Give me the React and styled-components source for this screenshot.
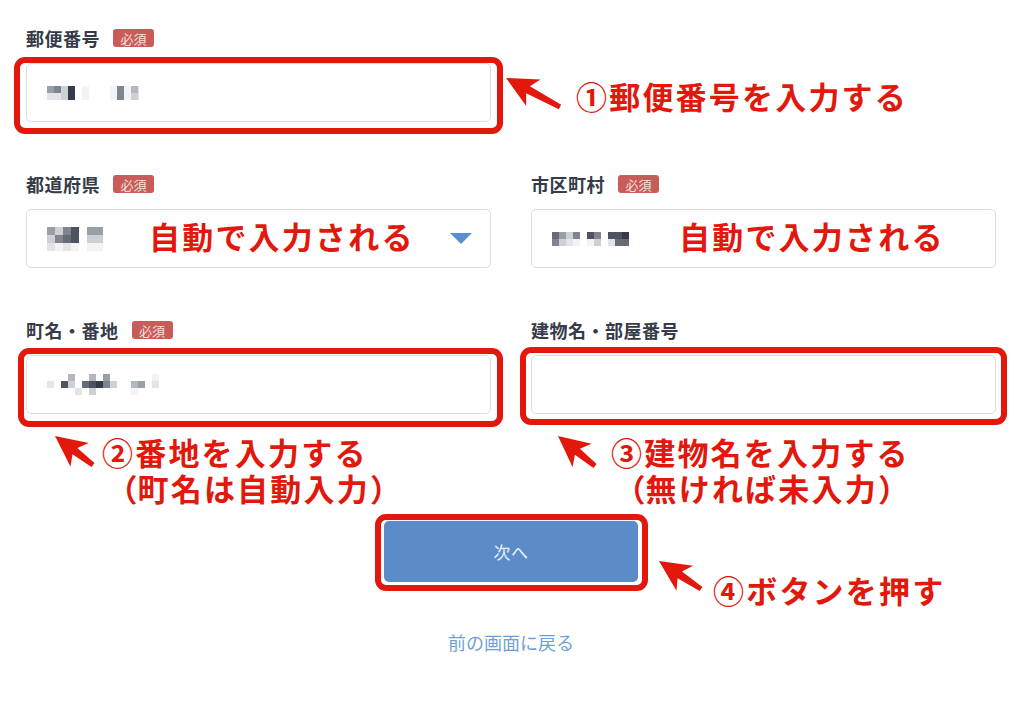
import React from "react";
import styled, { createGlobalStyle } from "styled-components";

const RED = "#e2180c";

const Global = createGlobalStyle`
  html, body { margin: 0; padding: 0; background: #fff; }
  body { font-family: "Noto Sans CJK JP", "Noto Sans", sans-serif; color: #353b48; }
  * { box-sizing: border-box; }
`;

const Page = styled.div`
  width: 996px;
  padding: 29px 0 40px 26px;
`;

const Grid = styled.div`
  display: grid;
  grid-template-columns: 465px 465px;
  column-gap: 40px;
  margin-top: ${(p) => p.$top || 0}px;
`;

const Field = styled.div`
  display: flex;
  flex-direction: column;
`;

const LabelRow = styled.div`
  display: flex;
  align-items: center;
  gap: 13px;
  height: 18px;
  margin-bottom: 16px;
`;

const LabelText = styled.span`
  font-size: 18px;
  line-height: 18px;
  font-weight: 700;
  letter-spacing: 0.5px;
  color: #353b48;
`;

const Badge = styled.span`
  display: inline-flex;
  align-items: center;
  justify-content: center;
  width: 41px;
  height: 18px;
  border-radius: 3px;
  background: #c95c59;
  color: #f7e0df;
  font-size: 13px;
  line-height: 1;
`;

const InputShell = styled.div`
  position: relative;
  display: flex;
  align-items: center;
  height: 59px;
  padding: 0 18px 0 20px;
  border: 1px solid #dadde2;
  border-radius: 5px;
  background: #fff;
`;

const Highlight = styled.div`
  position: absolute;
  top: ${(p) => p.$t}px;
  right: ${(p) => p.$r}px;
  bottom: ${(p) => p.$b}px;
  left: ${(p) => p.$l}px;
  border: 6px solid ${RED};
  border-radius: 11px;
  pointer-events: none;
`;

const RedText = styled.div`
  color: ${RED};
  font-size: 31px;
  line-height: 36px;
  font-weight: 700;
  letter-spacing: 2.2px;
  white-space: nowrap;
  margin-left: ${(p) => p.$ml || 0}px;
  margin-top: ${(p) => p.$mt || 0}px;
`;

const Paren = styled.span`
  font-feature-settings: "halt";
  letter-spacing: 0;
`;

const Indent = styled.div`
  padding-left: ${(p) => p.$pl}px;
`;

const Caret = styled.span`
  margin-left: auto;
  width: 0;
  height: 0;
  border-left: 11.5px solid transparent;
  border-right: 11.5px solid transparent;
  border-top: 11px solid #5a8fd3;
`;

const Callout = styled.div`
  display: flex;
  align-items: flex-start;
  align-self: end;
  height: 59px;
`;

const Annotation = styled.div`
  display: flex;
  align-items: flex-start;
  margin-top: 8px;
`;

const ArrowSvg = styled.svg`
  flex: none;
  display: block;
  margin-left: ${(p) => p.$ml || 0}px;
  margin-top: ${(p) => p.$mt || 0}px;
`;

const ButtonWrap = styled.div`
  position: relative;
  width: 254px;
  margin: 15px auto 0;
`;

const NextButton = styled.button`
  display: block;
  width: 100%;
  height: 61px;
  border: none;
  border-radius: 5px;
  background: #5b8cc7;
  color: #eaf1fb;
  font-family: inherit;
  font-size: 17px;
  letter-spacing: 0.5px;
  cursor: pointer;
`;

const SideCallout = styled.div`
  position: absolute;
  left: calc(100% + 7px);
  top: 26px;
  display: flex;
  align-items: flex-start;
`;

const BackLink = styled.a`
  display: block;
  width: fit-content;
  margin: 48px auto 0;
  font-size: 18px;
  line-height: 24px;
  color: #6f9fd6;
  text-decoration: none;
`;

const MosaicSvg = styled.svg`
  flex: none;
  display: block;
`;

const SHADES = {
  "1": "#f2f3f5",
  "2": "#e3e4e7",
  "3": "#cdd0d4",
  "4": "#b4b7bd",
  "5": "#9a9ea6",
  "6": "#80848e",
  "7": "#666b76",
  "8": "#4d5360",
  "9": "#353b48",
};

function Mosaic({ rows, cell, width }) {
  const h = rows.length * cell;
  return (
    <MosaicSvg width={width} height={h} viewBox={`0 0 ${width} ${h}`}>
      {rows.map((r, y) =>
        r.split("").map((c, x) =>
          SHADES[c] ? (
            <rect key={`${x}-${y}`} x={x * cell} y={y * cell} width={cell} height={cell} fill={SHADES[c]} />
          ) : null
        )
      )}
    </MosaicSvg>
  );
}

function Arrow({ dx, dy, ml, mt }) {
  const pad = 14;
  const L = Math.hypot(dx, dy);
  const a = (Math.atan2(dy, dx) * 180) / Math.PI;
  const w = dx + pad * 2;
  const h = dy + pad * 2;
  return (
    <ArrowSvg width={w} height={h} viewBox={`0 0 ${w} ${h}`} $ml={ml} $mt={mt}>
      <g transform={`translate(${pad} ${pad}) rotate(${a})`}>
        <path
          d={`M0 0 L31 -15 L25 -4 L${L} -2.5 L${L} 2.5 L25 4 L31 15 Z`}
          fill={RED}
        />
      </g>
    </ArrowSvg>
  );
}

function Label({ text, required }) {
  return (
    <LabelRow>
      <LabelText>{text}</LabelText>
      {required && <Badge>必須</Badge>}
    </LabelRow>
  );
}

export default function App() {
  return (
    <>
      <Global />
      <Page>
        <Grid>
          <Field>
            <Label text="郵便番号" required />
            <InputShell>
              <Mosaic width={92} cell={7} rows={["5639 1...16142", "2239 1...16132"]} />
              <Highlight $t={-7} $r={-13} $b={-13} $l={-13} />
            </InputShell>
          </Field>
          <Callout>
            <Arrow dx={54} dy={29} ml={-39} mt={1} />
            <RedText $ml={2} $mt={15}>①郵便番号を入力する</RedText>
          </Callout>
        </Grid>

        <Grid $top={53}>
          <Field>
            <Label text="都道府県" required />
            <InputShell>
              <Mosaic width={56} cell={8} rows={["5368 55", "3678 33", "2121 11"]} />
              <RedText $ml={46} $mt={-6}>自動で入力される</RedText>
              <Caret />
            </InputShell>
          </Field>
          <Field>
            <Label text="市区町村" required />
            <InputShell>
              <Mosaic width={91} cell={7} rows={["7536.86.889", "6321.13.277"]} />
              <RedText $ml={36} $mt={-6}>自動で入力される</RedText>
            </InputShell>
          </Field>
        </Grid>

        <Grid $top={53}>
          <Field>
            <Label text="町名・番地" required />
            <InputShell>
              <Mosaic
                width={154}
                cell={7}
                rows={["...4..4.5......1....", "2.83.78963..45.2....", "....2.3.....1......."]}
              />
              <Highlight $t={-8} $r={-13} $b={-14} $l={-9} />
            </InputShell>
          </Field>
          <Field>
            <Label text="建物名・部屋番号" />
            <InputShell>
              <Highlight $t={-9} $r={-12} $b={-12} $l={-12} />
            </InputShell>
          </Field>
        </Grid>

        <Grid>
          <Annotation>
            <Arrow dx={38} dy={29} ml={15} />
            <RedText $ml={-5} $mt={12}>
              <div>②番地を入力する</div>
              <Indent $pl={20}>
                <Paren>（</Paren>町名は自動入力<Paren>）</Paren>
              </Indent>
            </RedText>
          </Annotation>
          <Annotation>
            <Arrow dx={37} dy={30} ml={13} />
            <RedText $ml={2} $mt={12}>
              <div>③建物名を入力する</div>
              <Indent $pl={19}>
                <Paren>（</Paren>無ければ未入力<Paren>）</Paren>
              </Indent>
            </RedText>
          </Annotation>
        </Grid>

        <ButtonWrap>
          <NextButton type="button">次へ</NextButton>
          <Highlight $t={-7} $r={-10} $b={-9} $l={-9} />
          <SideCallout>
            <Arrow dx={42} dy={28} />
            <RedText $ml={-2} $mt={25}>④ボタンを押す</RedText>
          </SideCallout>
        </ButtonWrap>

        <BackLink href="#">前の画面に戻る</BackLink>
      </Page>
    </>
  );
}
